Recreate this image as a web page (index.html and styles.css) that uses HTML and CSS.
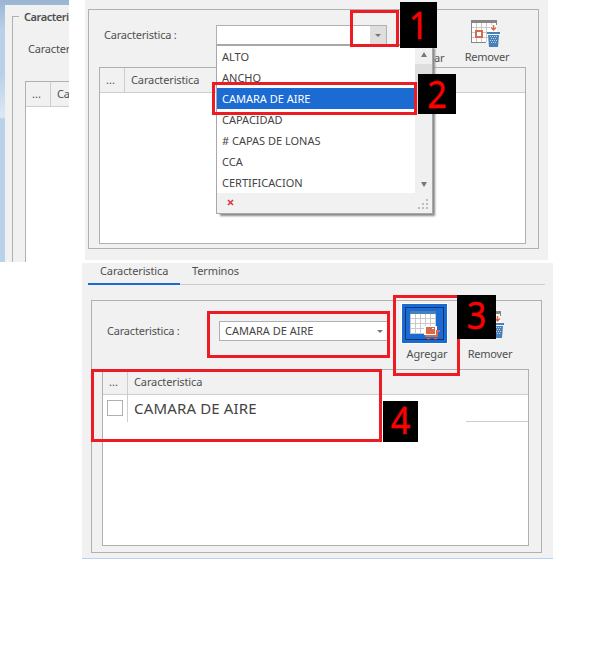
FILE: index.html
```html
<!DOCTYPE html>
<html lang="es">
<head>
<meta charset="utf-8">
<title>Caracteristica</title>
<link rel="stylesheet" href="styles.css">
</head>
<body>
<svg width="0" height="0" class="defs">
  <symbol id="remove" viewBox="0 0 30 28">
    <path d="M1 3h25v20H1z" fill="#fff"/>
    <path d="M1 7.500h25M1 12.500h25M1 17.500h16M5.500 3v19M10.500 3v19M15.500 3v19M20.500 3v9" stroke="#c9c9c9" fill="none"/>
    <path d="M0 0h26v3H0zM0 3h1v20H0zM0 22h15v1H0zM25 3h1v3h-1z" fill="#868686"/>
    <path d="M5 11h6v6H5z" fill="#fff" stroke="#d9694a" stroke-width="2"/>
    <path d="M19 5h7v7h-7z" fill="#fff"/>
    <path d="M22.500 5v5M20 7.500l2.500 2.500L25 7.500" stroke="#d9694a" stroke-width="1.500" fill="none"/>
    <path d="M16 12h13v2H16zM17 15h11l-1 12h-9z" fill="#4a80b8"/>
    <path d="M19 16.500h7M20 18.500h6M19 20.500h7M20 22.500h6" stroke="#b9d3ea" stroke-dasharray="1 1"/>
  </symbol>
</svg>
<div class="top">
  <section class="clip">
    <div class="clip-body">
      <div class="clip-group">
        <h2>Caracteristica</h2>
        <p class="label">Caracteristica :</p>
        <div class="table"><div class="head"><span class="dots">...</span><span>Caracteristica</span></div></div>
      </div>
    </div>
  </section>
  <section class="panel first">
    <div class="group">
      <div class="tools">
        <span class="label">Caracteristica :</span>
        <div class="combo"><i class="drop"><b class="arrow"></b></i></div>
        <div class="tool add-tool"><span>Agregar</span></div>
        <div class="tool rem-tool"><svg width="30" height="28"><use href="#remove"/></svg><span>Remover</span></div>
      </div>
      <div class="table"><div class="head"><span class="dots">...</span><span>Caracteristica</span></div></div>
    </div>
  </section>
</div>
<section class="panel second">
  <nav><span class="active">Caracteristica</span><span>Terminos</span></nav>
  <div class="group">
    <div class="tools">
      <span class="label">Caracteristica :</span>
      <div class="combo"><span class="caps">CAMARA DE AIRE</span><b class="arrow"></b></div>
      <div class="tool add-tool">
        <div class="picked"><svg width="45" height="39" viewBox="0 0 45 39">
          <path d="M8 8h26v22H8z" fill="#fff"/><path d="M8 7h26v3H8z" fill="#4a80b8"/>
          <path d="M8 14.500h26M8 19.500h26M8 24.500h14M8 29.500h14M8.500 10v20M13.500 10v20M18.500 10v20M23.500 10v12M28.500 10v12M33.500 10v12" stroke="#c9c9c9"/>
          <path d="M22 22h13v9H22z" fill="#fff"/>
          <path d="M24 23h9v7h-9z" fill="#d9694a"/><path d="M30 24h2v1h-2z" fill="#fff"/><path d="M38 27h-3v5H23" fill="none" stroke="#d9694a" stroke-width="2"/>
          <path d="M25 34h3v2h-3zM32 34h3v2h-3z" fill="#d9694a"/>
          <path d="M3.500 3.500h38v32h-38z" fill="none" stroke="#001" stroke-dasharray="1 1"/>
        </svg></div><span>Agregar</span>
      </div>
      <div class="tool rem-tool"><svg width="30" height="28"><use href="#remove"/></svg><span>Remover</span></div>
    </div>
    <div class="table">
      <div class="head"><span class="dots">...</span><span>Caracteristica</span></div>
      <div class="row"><span class="check"><i></i></span><span class="value">CAMARA DE AIRE</span><i class="rule"></i></div>
    </div>
  </div>
</section>

<div class="menu">
  <div class="list">
    <ul class="caps"><li>ALTO</li><li>ANCHO</li><li class="sel">CAMARA DE AIRE</li><li>CAPACIDAD</li><li># CAPAS DE LONAS</li><li>CCA</li><li>CERTIFICACION</li></ul>
    <div class="scroll"><i class="up"></i><i class="thumb"></i><i class="down"></i></div>
  </div>
  <div class="foot">
    <svg width="7" height="7"><path d="M1 1l5 5M6 1L1 6" stroke="#e0343f" stroke-width="1.600"/></svg>
    <svg width="11" height="11" fill="#bdbdbd"><path d="M8 0h2v2H8zM4 4h2v2H4zM8 4h2v2H8zM0 8h2v2H0zM4 8h2v2H4zM8 8h2v2H8z"/></svg>
  </div>
</div>
<div class="mark m1"></div><div class="mark m2"></div><div class="mark m3"></div><div class="mark m4"></div><div class="mark m5"></div>
<div class="num n1"><b>1</b></div><div class="num n2"><b>2</b></div><div class="num n3"><b>3</b></div><div class="num n4"><b>4</b></div>
</body>
</html>
```
FILE: styles.css
```css
* { box-sizing: border-box; margin: 0; padding: 0; }
body { position: relative; width: 612px; height: 648px; overflow: hidden; background: #fff; color: #505050; font: 11px/16px "Noto Sans", "Open Sans", sans-serif; letter-spacing: -.12px; }
.defs { position: absolute; }
.top { display: flex; align-items: flex-start; gap: 16px; height: 263px; }
i, b { display: block; }
span { white-space: nowrap; }
.caps { letter-spacing: 0; color: #444; }

.clip { width: 69px; height: 262px; overflow: hidden; padding: 5px 0 0 5px; background: linear-gradient(#9ab4d2 0, #b9d0ea 30px, #b9d0ea 75px, #dce8f4 117px, #bad1ea 119px); }
.clip-body { width: 180px; height: 257px; padding: 11px 0 0 7px; background: #f1f1f1; }
.clip-group { height: 246px; padding-left: 12px; border-left: 1px solid #b0b0b0; background: linear-gradient(#b0b0b0, #b0b0b0) 0 0 / 6px 1px no-repeat; }
.clip h2 { height: 25px; margin-left: -1px; font-size: 11px; font-weight: 600; line-height: 16px; letter-spacing: -.45px; transform: translateY(-7px); }
.clip .label { height: 40px; padding-left: 3px; }
.clip .table { height: 200px; }

.panel { background: #f1f1f1; }
.first { width: 463px; height: 260px; padding: 9px 0 0 3px; }
.group { width: 451px; height: 240px; padding: 0 10px; border: 1px solid #b0b0b0; }
.tools { display: flex; height: 57px; padding-left: 5px; }
.label { letter-spacing: -.2px; }
.tools .label { width: 112px; padding-top: 17px; }
.combo { display: flex; justify-content: space-between; align-items: center; width: 171px; height: 20px; margin-top: 15px; border: 1px solid #b0b0b0; background: #fff; }
.drop { display: grid; place-items: center; width: 16px; height: 18px; margin-left: auto; background: #dedede; }
.arrow { width: 0; border: 3px solid transparent; border-top-color: #777; border-bottom: 0; }
.tool { display: flex; flex-direction: column; align-items: center; }
.add-tool { width: 60px; margin-left: 7px; justify-content: flex-end; }
.rem-tool { width: 60px; margin-left: 2px; padding-top: 10px; }
.rem-tool span { padding-left: 2px; letter-spacing: -.2px; }
.first .add-tool { padding-bottom: 1px; }
.rem-tool svg { flex: none; margin: 0 0 1px 0; }
.table { width: 427px; height: 177px; border: 1px solid #b0b0b0; background: #fff; }
.head { display: flex; height: 25px; line-height: 24px; background: #f1f1f1; border-bottom: 1px solid #cdcdcd; }
.dots { width: 25px; margin-right: 6px; padding-left: 6px; border-right: 1px solid #cdcdcd; letter-spacing: .1px; }

.second { width: 471px; height: 296px; margin-left: 82px; padding: 0 6px; border-bottom: 1px solid #b5d3f0; }
.second nav { display: flex; width: 457px; height: 22px; background: linear-gradient(#cdcdcd, #cdcdcd) 0 21px / 100% 1px no-repeat; }
.second nav span { width: 92px; padding-left: 12px; }
.second nav .active { height: 22px; border-bottom: 2px solid #1b6bd2; }
.second .group { height: 253px; margin: 15px 0 0 3px; }
.second .tools { height: 68px; }
.second .label { padding-top: 22px; }
.second .combo { width: 170px; margin-top: 20px; padding: 0 5px; }
.second .add-tool { justify-content: flex-start; padding-top: 3px; margin-left: 8px; }
.picked { width: 45px; height: 39px; margin: 0 5px 3px 0; outline: 1px solid #fff; background: #1b6bd2; }
.picked svg { display: block; }
.second .rem-tool { padding-top: 10px; margin-left: 3px; }
.second .rem-tool span { padding-left: 0; }
.second .rem-tool svg { margin-bottom: 7px; }
.second .table { height: 177px; }
.row { display: flex; height: 27px; }
.check { width: 25px; padding: 5px 0 0 4px; border-right: 1px solid #cdcdcd; }
.check i { width: 16px; height: 16px; border: 1px solid #b0b0b0; }
.value { padding-left: 6px; font-size: 15px; line-height: 26px; letter-spacing: .16px; color: #444; }
.rule { align-self: flex-end; width: 62px; height: 1px; margin-left: auto; background: #cdcdcd; }

.menu { position: absolute; left: 216px; top: 44px; width: 217px; height: 170px; border: 1px solid #a8a8a8; border-top-width: 2px; background: #fff; box-shadow: 3px 3px 2px -1px #888; color: #444; }
.list { display: flex; height: 147px; }
.menu ul { width: 198px; list-style: none; }
.menu li { height: 21px; padding-left: 5px; line-height: 22px; }
.menu .sel { background: #1b6bd2; color: #fff; }
.scroll { display: flex; flex-direction: column; width: 17px; background: #f0f0f0; }
.up { width: 0; margin: 6px auto 7px; border: 3.5px solid transparent; border-bottom: 5px solid #777; border-top: 0; }
.thumb { height: 50px; background: #dedede; }
.down { width: 0; margin: auto auto 6px; border: 3.5px solid transparent; border-top: 5px solid #777; border-bottom: 0; }
.foot { display: flex; justify-content: space-between; height: 20px; padding: 6px 3px 0 10px; background: #f1f1f1; }

.mark { position: absolute; border: 3px solid #ed1c24; }
.m1 { left: 350px; top: 10px; width: 49px; height: 37px; }
.m2 { left: 212px; top: 82px; width: 205px; height: 33px; }
.m3 { left: 207px; top: 311px; width: 183px; height: 47px; }
.m4 { left: 393px; top: 295px; width: 67px; height: 81px; }
.m5 { left: 91px; top: 369px; width: 291px; height: 73px; }
.num { position: absolute; background: #000; color: #f00; font: 38px/44px "Noto Sans", sans-serif; text-align: center; }
.num b { font-weight: 400; transform: scaleX(.9); -webkit-text-stroke: .4px #f00; }
.n1 { left: 400px; top: 2px; width: 37px; height: 46px; }
.n2 { left: 418px; top: 74px; width: 38px; height: 40px; line-height: 38px; }
.n3 { left: 457px; top: 295px; width: 39px; height: 44px; line-height: 39px; }
.n4 { left: 383px; top: 401px; width: 35px; height: 41px; line-height: 36px; }
```
